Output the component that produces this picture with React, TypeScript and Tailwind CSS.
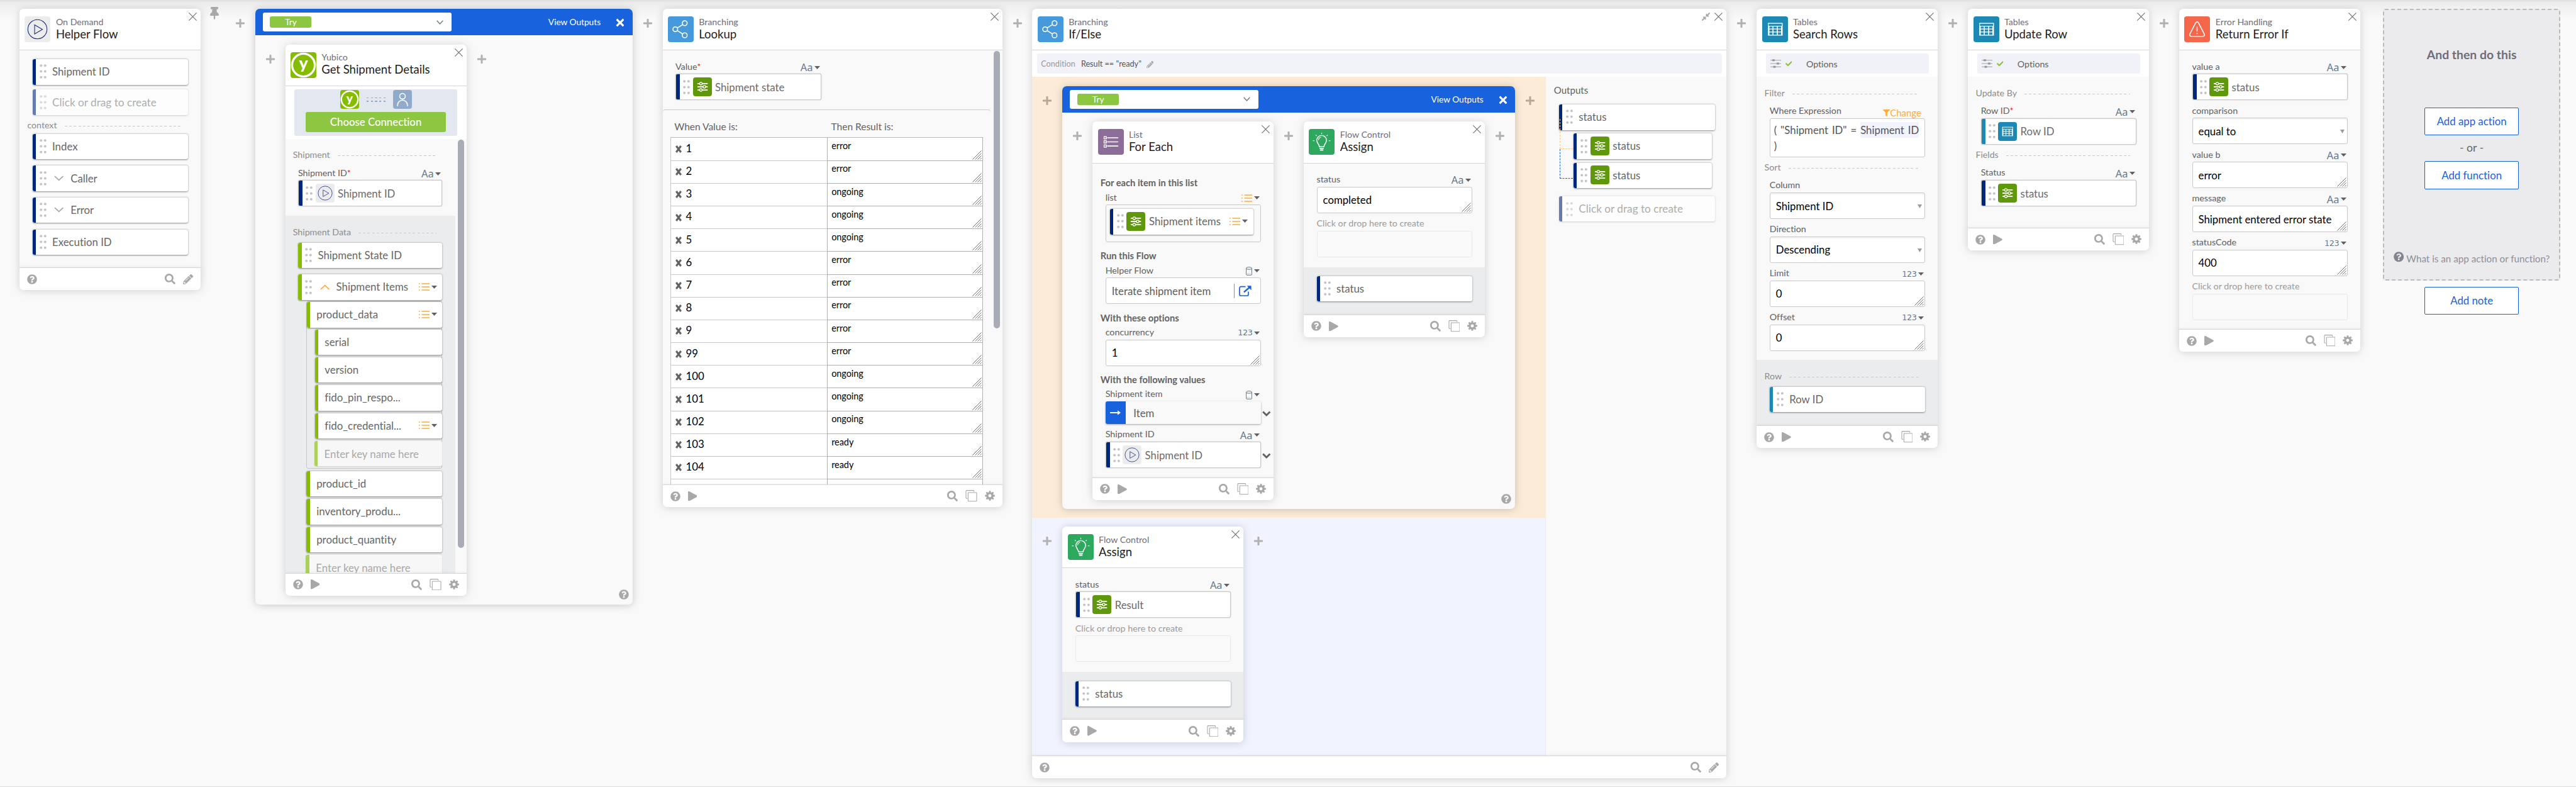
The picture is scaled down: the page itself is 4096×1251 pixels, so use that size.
import type { ReactNode } from 'react';
import {
  FaCheck,
  FaCompressAlt,
  FaFilter,
  FaPencilAlt,
  FaPlay,
  FaPlus,
  FaQuestionCircle,
  FaSearch,
  FaThumbtack,
  FaTimes,
} from 'react-icons/fa';

/* ---------- application icons ---------- */

const appIcon = 'block size-full rounded-[4px]';

function PlayIcon() {
  return (
    <svg viewBox="0 0 34 34" className={appIcon + ' bg-[#ececec]'} fill="none" stroke="#1c2c83" strokeWidth="0.9">
      <circle cx="17" cy="17" r="12.6" />
      <path d="M13.3 11.2 L23.6 17.2 L13.3 23.2 Z" />
    </svg>
  );
}

function YubicoIcon() {
  return (
    <svg viewBox="0 0 34 34" className={appIcon + ' bg-[#85bc00]'}>
      <circle cx="17" cy="17" r="15" fill="none" stroke="#fff" strokeWidth="2.8" />
      <text x="17" y="22.6" textAnchor="middle" fill="#fff" fontFamily="Lato" fontWeight="900" fontSize="22">
        y
      </text>
    </svg>
  );
}

function BranchIcon() {
  return (
    <svg viewBox="0 0 34 34" className={appIcon + ' bg-[#469adb]'} fill="none" stroke="#fff" strokeWidth="1.3">
      <circle cx="9.8" cy="17" r="3.1" />
      <circle cx="22.2" cy="9" r="3.2" />
      <circle cx="22.2" cy="25" r="3.2" />
      <path d="M12.4 15.2 L19.5 10.9 M12.4 18.8 L19.5 23.2" />
    </svg>
  );
}

function ListAppIcon() {
  return (
    <svg viewBox="0 0 34 34" className={appIcon + ' bg-[#8c6d97]'} fill="none" stroke="#fff">
      {[11.6, 17, 22.5].map((y) => (
        <g key={y}>
          <rect x="7.9" y={y - 1.5} width="3" height="3" strokeWidth="1.1" />
          <path d={`M12 ${y} H26.6`} strokeWidth="1.3" />
        </g>
      ))}
    </svg>
  );
}

function BulbIcon() {
  return (
    <svg viewBox="0 0 34 34" className={appIcon + ' bg-[#2fa85f]'} fill="none" stroke="#fff" strokeWidth="1.2">
      <path d="M14 23.4 c0-3.2-3.4-4.4-3.4-8.4 a6.4 6.4 0 0 1 12.8 0 c0 4-3.4 5.2-3.4 8.4 Z" />
      <path d="M12.8 14.8 a4.3 4.3 0 0 1 3.4-4" strokeWidth="0.9" />
      <path d="M14.2 25.6 H19.8 M14.8 27.8 H19.2" strokeWidth="1.5" />
      <path d="M17 4.8 V6.8 M9.2 7.8 L10.3 9.3 M24.8 7.8 L23.7 9.3 M5.4 15.5 H7.6 M26.4 15.5 H28.6" strokeWidth="1" />
    </svg>
  );
}

function TableIcon() {
  return (
    <svg viewBox="0 0 34 34" className={appIcon + ' bg-[#1c88b3]'} fill="none" stroke="#fff">
      <rect x="8" y="9.2" width="18.4" height="15.6" strokeWidth="1.1" />
      <path d="M8 12.9 H26.4 M8 16.7 H26.4 M8 20.6 H26.4" strokeWidth="1.1" />
      <path d="M8.9 12.9 V24.5 M25.5 12.9 V24.5 M14.2 12.9 V24.5 M20 12.9 V24.5" strokeWidth="1.3" />
    </svg>
  );
}

function WarnIcon() {
  return (
    <svg viewBox="0 0 34 34" className={appIcon + ' bg-[#f5674a]'} fill="none" stroke="#fff" strokeWidth="1.3">
      <path d="M15.2 8.4 a2.1 2.1 0 0 1 3.6 0 L26.5 23.4 a2 2 0 0 1-1.8 3 H9.3 a2 2 0 0 1-1.8-3 Z" strokeLinejoin="round" />
      <path d="M17 13.4 V20 M17 21.8 V23.4" />
    </svg>
  );
}

function SlidersIcon() {
  return (
    <svg viewBox="0 0 25 25" className={appIcon + ' bg-[#5f990b]'} fill="#5f990b" stroke="#fff">
      <path d="M5.8 8.3 H19.4 M5.8 12.5 H19.4 M5.8 16.7 H19.4" strokeWidth="1.5" />
      <circle cx="10.4" cy="8.3" r="1.7" strokeWidth="1.1" />
      <circle cx="15" cy="12.5" r="1.7" strokeWidth="1.1" />
      <circle cx="10.4" cy="16.7" r="1.7" strokeWidth="1.1" />
    </svg>
  );
}

function UserIcon() {
  return (
    <svg viewBox="0 0 25 25" className={appIcon + ' bg-[#8faacb]'} fill="none" stroke="#fff" strokeWidth="1.3">
      <circle cx="12.5" cy="8.3" r="3.7" />
      <path d="M6 21.4 V20 a6.5 6.5 0 0 1 13 0 V21.4" />
    </svg>
  );
}

/* ---------- small glyphs ---------- */

function Gear() {
  return (
    <svg viewBox="0 0 20 20" className="mb-[1px] size-[16px]" fill="currentColor">
      {[0, 45, 90, 135].map((a) => (
        <rect key={a} x="8.2" y="0.2" width="3.6" height="19.6" rx="0.8" transform={`rotate(${a} 10 10)`} />
      ))}
      <circle cx="10" cy="10" r="7.3" />
      <circle cx="10" cy="10" r="3.1" fill="#fff" />
    </svg>
  );
}

function Copy() {
  return (
    <svg viewBox="0 0 19 19" className="size-[18.6px]" fill="none" stroke="currentColor" strokeWidth="1.1">
      <path d="M3.4 13.6 H2 a1 1 0 0 1-1-1 V1.6 a1 1 0 0 1 1-1 H13 a1 1 0 0 1 1 1 V2.8" />
      <rect x="4.4" y="4" width="14" height="14.2" rx="0.9" />
    </svg>
  );
}

function Cross() {
  return (
    <svg viewBox="0 0 13 13" className="size-[13px] shrink-0" stroke="#6b6b6b" strokeWidth="1.05">
      <path d="M0.4 0.4 L12.6 12.6 M12.6 0.4 L0.4 12.6" />
    </svg>
  );
}

function Caret() {
  return (
    <svg viewBox="0 0 9 5" className="h-[5px] w-[9px]" fill="#616161">
      <path d="M0 0 H9 L4.5 5 Z" />
    </svg>
  );
}

function Chevron({ up }: { up?: boolean }) {
  return (
    <svg
      viewBox="0 0 16 9"
      className={up ? 'mr-[10.6px] h-[9px] w-[15.4px]' : 'mr-[10.6px] h-[9px] w-[15.4px] rotate-180'}
      fill="none"
      stroke={up ? '#fbad40' : '#a8a8a8'}
      strokeWidth="1.8"
    >
      <path d="M1 8 L8 1.6 L15 8" />
    </svg>
  );
}

function HeavyChevron() {
  return (
    <svg viewBox="0 0 14 9" className="mt-[2px] -mr-[16px] ml-[2.4px] h-[9px] w-[13.6px] shrink-0" fill="none" stroke="#616161" strokeWidth="3">
      <path d="M1.2 1.4 L7 7 L12.8 1.4" />
    </svg>
  );
}

function ListGlyph() {
  return (
    <svg viewBox="0 0 17 14" className="h-[14px] w-[17px]" stroke="#fbad40" strokeWidth="1.6">
      <path d="M0 2 H1.8 M4.4 2 H17 M0 7 H1.8 M4.4 7 H17 M0 12 H1.8 M4.4 12 H17" />
    </svg>
  );
}

function Cylinder() {
  return (
    <svg viewBox="0 0 10 14" className="h-[14px] w-[10px]" fill="none" stroke="#66788a" strokeWidth="1">
      <ellipse cx="5" cy="2.4" rx="4.4" ry="1.8" />
      <path d="M0.6 2.4 V12 a1.3 1.3 0 0 0 1.3 1.3 H8.1 A1.3 1.3 0 0 0 9.4 12 V2.4" />
      <path d="M2 11 H8" strokeDasharray="1 1" strokeWidth="0.7" />
    </svg>
  );
}

function Grip() {
  return (
    <svg viewBox="0 0 15 15" className="absolute right-[1px] bottom-[1px] size-[15px]" stroke="#6f6f6f" strokeWidth="1">
      <path d="M0.4 14.6 L14.6 0.4 M4.6 14.6 L14.6 4.6 M8.4 14.6 L14.6 8.4 M12.2 14.6 L14.6 12.2" />
    </svg>
  );
}

function Dots({ faded }: { faded?: boolean }) {
  return (
    <svg viewBox="0 0 11 23" className="h-[23px] w-[11px] shrink-0" fill={faded ? '#dadada' : '#c4c4c4'}>
      {[2.2, 11.5, 20.8].map((y) => (
        <g key={y}>
          <circle cx="2.2" cy={y} r="2" />
          <circle cx="8.8" cy={y} r="2" />
        </g>
      ))}
    </svg>
  );
}

function Help({ className = '' }: { className?: string }) {
  return <FaQuestionCircle className={'size-[16px] text-[#a8a8a8] ' + className} />;
}

/* ---------- structure ---------- */

function Plus({ warm }: { warm?: boolean }) {
  return (
    <div className="flex w-[47.9px] shrink-0 justify-center pt-[15px]">
      <FaPlus className={warm ? 'size-[16px] text-[#b3a898]' : 'size-[16px] text-[#b0b0b0]'} />
    </div>
  );
}

function CardHeader({ icon, cat, title, extra }: { icon: ReactNode; cat: string; title: string; extra?: ReactNode }) {
  return (
    <div className="flex h-[66.2px] shrink-0 rounded-t-[7px] border-b border-[#d5d6d9] bg-white">
      <div className="mt-[12px] ml-[8.3px] size-[41px]">{icon}</div>
      <div className="ml-[8.4px] pt-[11.8px]">
        <div className="text-[14.2px] leading-[18px] text-[#6e6e78]">{cat}</div>
        <div className="text-[18.5px] leading-[21px] text-[#1d1d21]">{title}</div>
      </div>
      <div className="mt-[6px] mr-[6px] ml-auto flex h-[13px] items-center gap-[6px]">
        {extra}
        <Cross />
      </div>
    </div>
  );
}

function CardFooter({ editable }: { editable?: boolean }) {
  return (
    <div className="relative z-10 flex h-[36.2px] shrink-0 items-center gap-[12px] rounded-b-[7px] border-t border-[#d5d6d9] bg-white px-[12px] text-[#a8a8a8] shadow-[0_-2px_3px_rgba(0,0,0,0.04)]">
      <Help />
      {!editable && <FaPlay className="h-[15.5px] w-[14.8px]" preserveAspectRatio="none" />}
      <FaSearch className="ml-auto size-[17px]" />
      {editable ? (
        <FaPencilAlt className="size-[16px]" />
      ) : (
        <>
          <Copy />
          <Gear />
        </>
      )}
    </div>
  );
}

type CardProps = {
  size: string;
  icon: ReactNode;
  cat: string;
  title: string;
  editable?: boolean;
  extra?: ReactNode;
  children: ReactNode;
};

function Card({ size, icon, cat, title, editable, extra, children }: CardProps) {
  return (
    <div className={'flex shrink-0 flex-col rounded-[7px] bg-[#f9f9f9] shadow-[0_1px_14px_rgba(0,0,0,0.17)] ' + size}>
      <CardHeader icon={icon} cat={cat} title={title} extra={extra} />
      <div className="relative flex min-h-0 flex-1 flex-col overflow-hidden">{children}</div>
      <CardFooter editable={editable} />
    </div>
  );
}

function TryBlock({ size, children }: { size: string; children: ReactNode }) {
  return (
    <div className={'relative flex shrink-0 flex-col rounded-[7px] bg-[#f9f9f9] shadow-[0_1px_14px_rgba(0,0,0,0.2)] ' + size}>
      <div className="flex h-[42px] shrink-0 items-center rounded-t-[7px] bg-[#1862de] pr-[12.6px] pl-[12px] text-[13.7px] text-white">
        <div className="flex h-[30px] w-[300px] items-center rounded-[3px] bg-white pr-[13px] pl-[11.8px]">
          <span className="h-[17.4px] w-[66px] rounded-[3px] bg-[#8dc640] text-center leading-[17px]">Try</span>
          <svg viewBox="0 0 11 7" className="ml-auto h-[7px] w-[11px]" fill="none" stroke="#6f7f8c" strokeWidth="1.5">
            <path d="M0.7 0.7 L5.5 6 L10.3 0.7" />
          </svg>
        </div>
        <span className="mr-[24px] ml-auto leading-[18px]">View Outputs</span>
        <FaTimes className="mt-[2px] h-[18px] w-[14px]" />
      </div>
      <div className="flex items-start pt-[14.6px]">{children}</div>
      <Help className="absolute right-[6px] bottom-[8px]" />
    </div>
  );
}

function Section({ children }: { children: string }) {
  return (
    <div className="flex h-[28.4px] shrink-0 items-center pt-[4px] pr-[30px] pl-[12.2px]">
      <span className="text-[14.2px] leading-[18px] text-[#8c8c8c]">{children}</span>
      <span className="mt-[3px] ml-[12.2px] h-px flex-1 bg-[repeating-linear-gradient(90deg,#c9c9c9_0_4px,transparent_4px_7.2px)]" />
    </div>
  );
}

type Kind = 'text' | 'number' | 'list' | 'object';

function KindPicker({ kind }: { kind: Kind }) {
  return (
    <span className="ml-auto flex items-center gap-[2.4px] pr-[2px] leading-[18px] text-[#66788a]">
      {kind === 'text' && <span className="font-['Noto_Sans'] text-[16.4px]">Aa</span>}
      {kind === 'number' && <span className="font-['DejaVu_Sans'] text-[12.8px] tracking-[-0.4px]">123</span>}
      {kind === 'list' && <ListGlyph />}
      {kind === 'object' && <Cylinder />}
      <Caret />
    </span>
  );
}

type FieldProps = {
  label: string;
  required?: boolean;
  kind?: Kind;
  muted?: boolean;
  action?: ReactNode;
  children: ReactNode;
};

function Field({ label, required, kind, muted, action, children }: FieldProps) {
  return (
    <div className="mx-[20.4px] shrink-0">
      <div className={'flex h-[27.9px] pt-[7.2px] text-[14.3px] leading-[18px] ' + (muted ? 'text-[#9b9b9b]' : 'text-[#606060]')}>
        <span>
          {label}
          {required && <span className="text-[#f01010]">*</span>}
        </span>
        {kind && <KindPicker kind={kind} />}
        {action}
      </div>
      {children}
    </div>
  );
}

const box = 'relative flex h-[42px] items-center rounded-[3px] border border-[#c8c8c8] bg-white text-[16.8px]';

function TextBox({ value }: { value: string }) {
  return (
    <div className={box + ' pl-[9px] whitespace-nowrap text-black'}>
      {value}
      <Grip />
    </div>
  );
}

function SelectBox({ value }: { value: string }) {
  return (
    <div className={box + ' justify-between pr-[4px] pl-[9px] text-black shadow-[inset_0_2px_2px_rgba(0,0,0,0.05)]'}>
      {value}
      <svg viewBox="0 0 7 6" className="mt-[2px] h-[6px] w-[7px]" fill="#9b9b9b">
        <path d="M0 0 H7 L3.5 6 Z" />
      </svg>
    </div>
  );
}

function EmptyBox() {
  return <div className="h-[42px] rounded-[3px] border border-[#e8e8e8] bg-[#fafafa]" />;
}

/* A dropped value: coloured spine, drag dots, source icon and its name. */
function Token({ icon, name, teal }: { icon: ReactNode; name: string; teal?: boolean }) {
  return (
    <div className={box + ' items-stretch shadow-[0_0_1.5px_rgba(0,0,0,0.3)]'}>
      <span className={teal ? 'w-[6px] rounded-l-[2px] bg-[#1c88b3]' : 'w-[6px] rounded-l-[2px] bg-[#00277a]'} />
      <span className="flex items-center pl-[5.5px] text-[#6b6b6b]">
        <Dots />
        <span className="mr-[5.4px] ml-[4.1px] size-[30px]">{icon}</span>
        {name}
      </span>
    </div>
  );
}

const spines = {
  navy: 'bg-[#00277a]',
  green: 'bg-[#85bc00]',
  teal: 'bg-[#1c88b3]',
};

type ItemProps = {
  name: string;
  tone?: keyof typeof spines;
  fold?: 'open' | 'closed';
  list?: boolean;
  icon?: ReactNode;
  className?: string;
};

function Item({ name, tone = 'navy', fold, list, icon, className = '' }: ItemProps) {
  return (
    <div className={'flex h-[40.3px] shrink-0 rounded-[3px] bg-white shadow-[0_0.5px_2.5px_rgba(0,0,0,0.45)] ' + className}>
      <span className={'w-[5.6px] rounded-l-[3px] ' + spines[tone]} />
      <div className="flex flex-1 items-center pr-[8.4px] pb-[1px] pl-[5.7px] text-[16.8px] text-[#666]">
        <Dots />
        {icon && <span className="mr-[5.6px] ml-[4.5px] size-[30px]">{icon}</span>}
        {!icon && <span className={fold ? 'w-[12.4px]' : 'w-[9.2px]'} />}
        {fold && <Chevron up={fold === 'open'} />}
        {name}
        {list && (
          <span className="ml-auto flex items-center gap-[3px]">
            <ListGlyph />
            <Caret />
          </span>
        )}
      </div>
    </div>
  );
}

/* Nested key of an object: no drag dots. */
function KeyItem({ name, list, className = '' }: { name: string; list?: boolean; className?: string }) {
  return (
    <div className={'flex h-[40.2px] shrink-0 rounded-[3px] bg-white shadow-[0_0.5px_2.5px_rgba(0,0,0,0.45)] ' + className}>
      <span className="w-[5.6px] rounded-l-[3px] bg-[#85bc00]" />
      <div className="flex flex-1 items-center pr-[8.4px] pb-[1px] pl-[10.2px] text-[16.9px] text-[#666]">
        {name}
        {list && (
          <span className="ml-auto flex items-center gap-[3px]">
            <ListGlyph />
            <Caret />
          </span>
        )}
      </div>
    </div>
  );
}

function NewKey({ className = '' }: { className?: string }) {
  return (
    <div className={'flex h-[40.2px] shrink-0 rounded-[3px] bg-[#f7f7f7] shadow-[0_0.5px_2px_rgba(0,0,0,0.12)] ' + className}>
      <span className="w-[5.6px] rounded-l-[3px] bg-[#abd05c]" />
      <div className="flex items-center pl-[10.4px] text-[16.8px] text-[#a9a9a9]">Enter key name here</div>
    </div>
  );
}

function NewItem({ className = '' }: { className?: string }) {
  return (
    <div className={'flex h-[40.3px] shrink-0 rounded-[3px] bg-[#fdfdfd] shadow-[0_0.5px_2.5px_rgba(0,0,0,0.18)] ' + className}>
      <span className="w-[5.6px] rounded-l-[3px] bg-[#667cb0]" />
      <div className="flex items-center gap-[9.2px] pl-[5.7px] text-[17.2px] text-[#adadad]">
        <Dots faded />
        Click or drag to create
      </div>
    </div>
  );
}

function Scrollbar({ className }: { className: string }) {
  return <div className={'absolute top-[1px] right-[3.6px] w-[9.6px] rounded-full bg-[#a9acb5] ' + className} />;
}

function OptionsBar() {
  return (
    <div className="h-[42px] shrink-0 bg-white px-[14.6px] pt-[5px]">
      <div className="flex h-[32px] items-center rounded-[3px] bg-[#f1f2f7] pl-[6.8px] text-[14.2px] text-[#606060]">
        <svg viewBox="0 0 17 16" className="h-[16px] w-[17px]" fill="#999" stroke="#999">
          <path d="M0 2.8 H17 M0 8 H17 M0 13.2 H17" strokeWidth="0.9" />
          <path d="M3.4 1.6 H6.8 V4 H3.4 Z M10.2 6.8 H13.6 V9.2 H10.2 Z M4.8 12 H8.2 V14.4 H4.8 Z" strokeWidth="0.6" />
        </svg>
        <FaCheck className="ml-[7px] size-[10.6px] text-[#84c341]" />
        <span className="ml-[22.6px]">Options</span>
      </div>
    </div>
  );
}

function Heading({ children }: { children: string }) {
  return <div className="h-[28.5px] shrink-0 pt-[12.4px] pl-[12.6px] text-[14.7px] leading-[19px] font-bold text-[#636363]">{children}</div>;
}

/* ---------- cards ---------- */

function HelperFlow() {
  return (
    <Card size="h-[447px] w-[288px]" icon={<PlayIcon />} cat="On Demand" title="Helper Flow" editable>
      <div className="flex flex-col px-[20.4px] pt-[14px]">
        <Item name="Shipment ID" />
        <NewItem className="mt-[7.8px]" />
      </div>
      <div className="h-[30.2px] shrink-0">
        <Section>context</Section>
      </div>
      <div className="flex flex-col gap-[10.3px] px-[20.4px]">
        <Item name="Index" />
        <Item name="Caller" fold="closed" />
        <Item name="Error" fold="closed" />
        <Item name="Execution ID" />
      </div>
    </Card>
  );
}

function ConnectionPanel() {
  return (
    <div className="h-[84px] shrink-0 bg-white px-[14.6px] pt-[5px]">
      <div className="flex h-[74.2px] flex-col items-center rounded-[3px] bg-[#e3e8f0] pt-[1.6px]">
        <div className="flex items-center gap-[12px]">
          <span className="size-[30px]">
            <YubicoIcon />
          </span>
          <span className="flex w-[30px] flex-col gap-[4px]">
            <span className="h-[1.4px] bg-[repeating-linear-gradient(90deg,#8faacb_0_3.4px,transparent_3.4px_6.7px)]" />
            <span className="h-[1.4px] bg-[repeating-linear-gradient(90deg,#8faacb_0_3.4px,transparent_3.4px_6.7px)]" />
          </span>
          <span className="size-[30px]">
            <UserIcon />
          </span>
        </div>
        <div className="mt-[5px] flex h-[31.2px] w-[223px] items-center justify-center rounded-[3px] bg-[#8dc640] text-[16.8px] font-medium text-white">
          Choose Connection
        </div>
      </div>
    </div>
  );
}

function ShipmentDetails() {
  return (
    <Card size="h-[876px] w-[288px]" icon={<YubicoIcon />} cat="Yubico" title="Get Shipment Details">
      <ConnectionPanel />
      <div className="relative flex min-h-0 flex-1 flex-col overflow-hidden">
        <div className="flex w-[270px] flex-col">
          <div className="flex h-[122.4px] shrink-0 flex-col pt-[9.3px]">
            <Section>Shipment</Section>
            <Field label="Shipment ID" required kind="text">
              <Token icon={<PlayIcon />} name="Shipment ID" />
            </Field>
          </div>
          <div className="flex flex-col bg-[#ebecee] pt-[9.3px]">
            <Section>Shipment Data</Section>
            <div className="mt-[4.6px] mr-[20.4px] ml-[20.4px] flex flex-col">
              <Item name="Shipment State ID" tone="green" />
              <Item name="Shipment Items" tone="green" fold="open" list className="mt-[10.6px]" />
              <div className="mt-[2.6px] ml-[12.6px] flex flex-col rounded-[3px] border border-[#c8c8c8] pb-[3px]">
                <KeyItem name="product_data" list className="-mr-px" />
                <div className="-mr-px ml-[13px] flex flex-col gap-[4.2px] pt-[3.2px]">
                  <KeyItem name="serial" />
                  <KeyItem name="version" />
                  <KeyItem name="fido_pin_respo..." />
                  <KeyItem name="fido_credential..." list />
                  <NewKey className="-ml-[1px]" />
                </div>
              </div>
              <div className="mt-[3.6px] ml-[13.4px] flex flex-col gap-[4.2px]">
                <KeyItem name="product_id" />
                <KeyItem name="inventory_produ..." />
                <KeyItem name="product_quantity" />
                <NewKey className="-ml-[1px]" />
              </div>
            </div>
          </div>
        </div>
        <Scrollbar className="h-[649px]" />
      </div>
    </Card>
  );
}

const lookupRows: [string, string][] = [
  ['1', 'error'],
  ['2', 'error'],
  ['3', 'ongoing'],
  ['4', 'ongoing'],
  ['5', 'ongoing'],
  ['6', 'error'],
  ['7', 'error'],
  ['8', 'error'],
  ['9', 'error'],
  ['99', 'error'],
  ['100', 'ongoing'],
  ['101', 'ongoing'],
  ['102', 'ongoing'],
  ['103', 'ready'],
  ['104', 'ready'],
];

function Lookup() {
  return (
    <Card size="h-[792px] w-[540px]" icon={<BranchIcon />} cat="Branching" title="Lookup">
      <div className="flex h-[94px] w-[272.6px] shrink-0 flex-col pt-[9.3px]">
        <Field label="Value" required kind="text">
          <Token icon={<SlidersIcon />} name="Shipment state" />
        </Field>
      </div>
      <div className="flex w-[521.5px] flex-col rounded-t-[4px] border-t border-[#c8c8c8]">
        <div className="flex h-[43.2px] shrink-0 pt-[17.2px] text-[15.5px] leading-[19px] text-[#636363]">
          <span className="w-[249.4px] pl-[18.6px]">When Value is:</span>
          <span className="pl-[18.6px]">Then Result is:</span>
        </div>
        <div className="ml-[12.4px] flex w-[497.4px] flex-col border-t border-[#b8b8b8]">
          {lookupRows.map(([when, result]) => (
            <div key={when} className="flex h-[36.18px] shrink-0 bg-white">
              <div className="flex w-[249px] items-center gap-[7px] border-b border-l border-[#c8c8c8] pb-[3px] pl-[6.6px]">
                <svg viewBox="0 0 10 12" className="mt-[3px] h-[12px] w-[10px]" stroke="#636363" strokeWidth="3.2">
                  <path d="M1.2 1 L8.8 11 M8.8 1 L1.2 11" />
                </svg>
                <span className="text-[16.8px] text-black">{when}</span>
              </div>
              <div className="relative flex-1 border-x border-b border-[#b0b0b0] pt-[3.8px] pl-[6.2px] text-[14.4px] leading-[18px] text-black">
                {result}
                <Grip />
              </div>
            </div>
          ))}
          <div className="flex h-[36px] bg-white">
            <div className="w-[249px] border-l border-[#c8c8c8]" />
            <div className="flex-1 border-x border-[#b0b0b0]" />
          </div>
        </div>
      </div>
      <Scrollbar className="h-[441px]" />
    </Card>
  );
}

function ForEach() {
  return (
    <Card size="h-[601.6px] w-[288px]" icon={<ListAppIcon />} cat="List" title="For Each">
      <div className="h-[9.3px] shrink-0" />
      <Heading>For each item in this list</Heading>
      <Field label="list" kind="list">
        <div className="h-[59.6px] rounded-[3px] border border-[#c8c8c8] pt-[6px] pl-[6px]">
          <Item name="Shipment items" icon={<SlidersIcon />} list className="w-[228px]" />
        </div>
      </Field>
      <Heading>Run this Flow</Heading>
      <Field label="Helper Flow" kind="object">
        <div className={box + ' justify-between pr-[14px] pl-[9px] text-[#5c5c5c]'}>
          Iterate shipment item
          <span className="flex items-center gap-[7px]">
            <span className="h-[23px] w-px bg-[#8f8f8f]" />
            <svg viewBox="0 0 20 17" className="h-[17px] w-[20px]" fill="none" stroke="#1862de" strokeWidth="1.7">
              <path d="M10.5 1.7 H3 a2 2 0 0 0-2 2 V14 a2 2 0 0 0 2 2 H13 a2 2 0 0 0 2-2 V9.4" />
              <path d="M8 10.4 L16.5 3" strokeWidth="2.4" />
              <path d="M12.6 0.2 H19.6 V7.2 Z" fill="#1862de" stroke="none" />
            </svg>
          </span>
        </div>
      </Field>
      <Heading>With these options</Heading>
      <Field label="concurrency" kind="number">
        <TextBox value="1" />
      </Field>
      <Heading>With the following values</Heading>
      <Field label="Shipment item" kind="object">
        <div className="flex items-center">
          <div className="flex h-[36.1px] w-[247.2px] shrink-0 overflow-hidden rounded-[3px] bg-[#f9f9f9] text-[16.8px] text-[#606060] shadow-[0_1px_3px_rgba(0,0,0,0.35)]">
            <span className="flex w-[32px] items-center justify-center bg-[#1862de]">
              <svg viewBox="0 0 17 8" className="h-[8px] w-[17px]" fill="#fff">
                <path d="M0 3.1 H12 V0.2 L17 4 L12 7.8 V4.9 H0 Z" />
              </svg>
            </span>
            <span className="flex items-center pl-[12.6px]">Item</span>
          </div>
          <HeavyChevron />
        </div>
      </Field>
      <Field label="Shipment ID" kind="text">
        <div className="flex items-center">
          <div className="w-[247.2px] shrink-0">
            <Token icon={<PlayIcon />} name="Shipment ID" />
          </div>
          <HeavyChevron />
        </div>
      </Field>
    </Card>
  );
}

function Assign({ children }: { children: ReactNode }) {
  return (
    <Card size="h-[342.6px] w-[288px]" icon={<BulbIcon />} cat="Flow Control" title="Assign">
      <div className="h-[9.3px] shrink-0" />
      <Field label="status" kind="text">
        {children}
      </Field>
      <Field label="Click or drop here to create" muted>
        <EmptyBox />
      </Field>
      <div className="mt-[16px] flex-1 bg-[#ebecee] px-[20.4px] pt-[14.4px]">
        <Item name="status" />
      </div>
    </Card>
  );
}

function Outputs() {
  return (
    <div className="w-[288px] shrink-0 border-l border-[#ececef] bg-[#f9f9f9] pr-[18.6px] pl-[20.4px]">
      <div className="-ml-[8px] pt-[11.4px] text-[15px] leading-[19px] text-[#606060]">Outputs</div>
      <div className="relative pt-[13.6px]">
        <Item name="status" />
        <div className="mt-[5.8px] mr-[5px] ml-[23px] flex flex-col gap-[6px]">
          <Item name="status" icon={<SlidersIcon />} />
          <Item name="status" icon={<SlidersIcon />} />
        </div>
        <NewItem className="mt-[13px]" />
        <div className="absolute top-[60px] left-[1.4px] h-[24px] w-[21px] border-b border-dashed border-[#fbca8c]" />
        <div className="absolute top-[36px] left-[1.4px] h-[48px] border-l border-dashed border-[#fbca8c]" />
        <div className="absolute top-[84px] left-[1.4px] h-[47px] w-[21px] border-b border-l border-dashed border-[#1862de]" />
      </div>
    </div>
  );
}

function IfElse() {
  return (
    <Card
      size="h-[1223px] w-[1104px]"
      icon={<BranchIcon />}
      cat="Branching"
      title="If/Else"
      editable
      extra={<FaCompressAlt className="size-[15px] text-[#a8a8a8]" />}
    >
      <div className="h-[42px] shrink-0 bg-white px-[7.4px] pt-[5px]">
        <div className="flex h-[32px] items-center rounded-[3px] bg-[#f2f3f8] pl-[6.4px] text-[12.7px] text-[#555]">
          <span className="text-[#999]">Condition</span>
          <span className="ml-[9px]">Result == "ready"</span>
          <FaPencilAlt className="mt-[2px] ml-[8px] size-[11.5px] text-[#a8a8a8]" />
        </div>
      </div>
      <div className="flex min-h-0 flex-1">
        <div className="flex flex-1 flex-col">
          <div className="flex h-[700.4px] shrink-0 items-start bg-[#fcecd7] pt-[14.6px]">
            <Plus warm />
            <TryBlock size="h-[672px] w-[720px]">
              <Plus />
              <ForEach />
              <Plus />
              <Assign>
                <TextBox value="completed" />
              </Assign>
              <Plus />
            </TryBlock>
            <Plus warm />
          </div>
          <div className="flex flex-1 items-start bg-[#f1f3ff] pt-[14.4px]">
            <Plus />
            <Assign>
              <Token icon={<SlidersIcon />} name="Result" />
            </Assign>
            <Plus />
          </div>
        </div>
        <Outputs />
      </div>
    </Card>
  );
}

function SearchRows() {
  return (
    <Card size="h-[698px] w-[288px]" icon={<TableIcon />} cat="Tables" title="Search Rows">
      <OptionsBar />
      <div className="h-[9.3px] shrink-0" />
      <Section>Filter</Section>
      <Field
        label="Where Expression"
        action={
          <span className="mt-[3px] mr-[6px] ml-auto flex items-center text-[15px] leading-[18px] text-[#fbad40]">
            <FaFilter className="mt-[1px] size-[11px]" />
            Change
          </span>
        }
      >
        <div className="h-[62px] rounded-[3px] border border-[#c8c8c8] bg-white pt-[2.2px] pl-[6px] text-[16.8px] leading-[32px] [word-spacing:1.6px] whitespace-nowrap text-[#555]">
          ( "Shipment ID" = <span className="bg-[#f1f3ff] py-[2px]">Shipment ID</span>
          <div className="-mt-[7px]">)</div>
        </div>
      </Field>
      <Section>Sort</Section>
      <Field label="Column">
        <SelectBox value="Shipment ID" />
      </Field>
      <Field label="Direction">
        <SelectBox value="Descending" />
      </Field>
      <Field label="Limit" kind="number">
        <TextBox value="0" />
      </Field>
      <Field label="Offset" kind="number">
        <TextBox value="0" />
      </Field>
      <div className="mt-[14.6px] flex-1 bg-[#ebecee] pt-[9.3px]">
        <Section>Row</Section>
        <Item name="Row ID" tone="teal" className="mx-[20.4px] mt-[5px]" />
      </div>
    </Card>
  );
}

function UpdateRow() {
  return (
    <Card size="h-[384px] w-[288px]" icon={<TableIcon />} cat="Tables" title="Update Row">
      <OptionsBar />
      <div className="h-[9.3px] shrink-0" />
      <Section>Update By</Section>
      <Field label="Row ID" required kind="text">
        <Token icon={<TableIcon />} name="Row ID" teal />
      </Field>
      <Section>Fields</Section>
      <Field label="Status" kind="text">
        <Token icon={<SlidersIcon />} name="status" />
      </Field>
    </Card>
  );
}

function ReturnError() {
  return (
    <Card size="h-[545px] w-[288px]" icon={<WarnIcon />} cat="Error Handling" title="Return Error If">
      <div className="h-[9.3px] shrink-0" />
      <Field label="value a" kind="text">
        <Token icon={<SlidersIcon />} name="status" />
      </Field>
      <Field label="comparison">
        <SelectBox value="equal to" />
      </Field>
      <Field label="value b" kind="text">
        <TextBox value="error" />
      </Field>
      <Field label="message" kind="text">
        <TextBox value="Shipment entered error state" />
      </Field>
      <Field label="statusCode" kind="number">
        <TextBox value="400" />
      </Field>
      <Field label="Click or drop here to create" muted>
        <EmptyBox />
      </Field>
    </Card>
  );
}

function ActionButton({ children, className = '' }: { children: string; className?: string }) {
  return (
    <button
      className={
        'flex h-[44.4px] w-[150px] shrink-0 items-center justify-center rounded-[2px] border-[1.5px] border-[#1862de] bg-white text-[16.8px] text-[#1862de] ' +
        className
      }
    >
      {children}
    </button>
  );
}

function NextStep() {
  return (
    <div className="ml-[36px] flex w-[282px] shrink-0 flex-col items-center">
      <div className="flex h-[431.6px] w-full flex-col items-center rounded-[3px] border-2 border-dashed border-[#bbb] bg-[#ebebed] pt-[59px]">
        <div className="text-[19.4px] leading-[24px] font-bold text-[#6e6e78]">And then do this</div>
        <ActionButton className="mt-[71.6px]">Add app action</ActionButton>
        <div className="h-[41.4px] text-[17.6px] leading-[40px] text-[#666]">- or -</div>
        <ActionButton>Add function</ActionButton>
        <div className="mt-[99px] flex items-center gap-[4px] text-[15.2px] leading-[22px] text-[#8f8f99]">
          <FaQuestionCircle className="mb-[5px] size-[16.4px] text-[#84848e]" />
          What is an app action or function?
        </div>
      </div>
      <ActionButton className="mt-[10.2px]">Add note</ActionButton>
    </div>
  );
}

export default function App() {
  return (
    <div className="relative h-[1251px] w-[4096px] overflow-hidden border-b border-[#dadada] bg-[#f9f9f9] bg-[linear-gradient(180deg,#dedede_0,#ececec_4px,#f1f1f1_12px,#f9f9f9_30px)] font-['Lato',sans-serif] [font-variant-ligatures:none]">
      <div className="flex items-start pt-[14.1px] pl-[31.2px]">
        <HelperFlow />
        <div className="flex w-[38.6px] shrink-0 justify-end pr-[9.6px]">
          <FaThumbtack className="-mt-[3.4px] h-[20.4px] w-[14px] text-[#a8a8a8]" preserveAspectRatio="none" />
        </div>
        <Plus />
        <TryBlock size="h-[947px] w-[600px]">
          <Plus />
          <ShipmentDetails />
          <Plus />
        </TryBlock>
        <Plus />
        <Lookup />
        <Plus />
        <IfElse />
        <Plus />
        <SearchRows />
        <Plus />
        <UpdateRow />
        <Plus />
        <ReturnError />
        <NextStep />
      </div>
    </div>
  );
}
